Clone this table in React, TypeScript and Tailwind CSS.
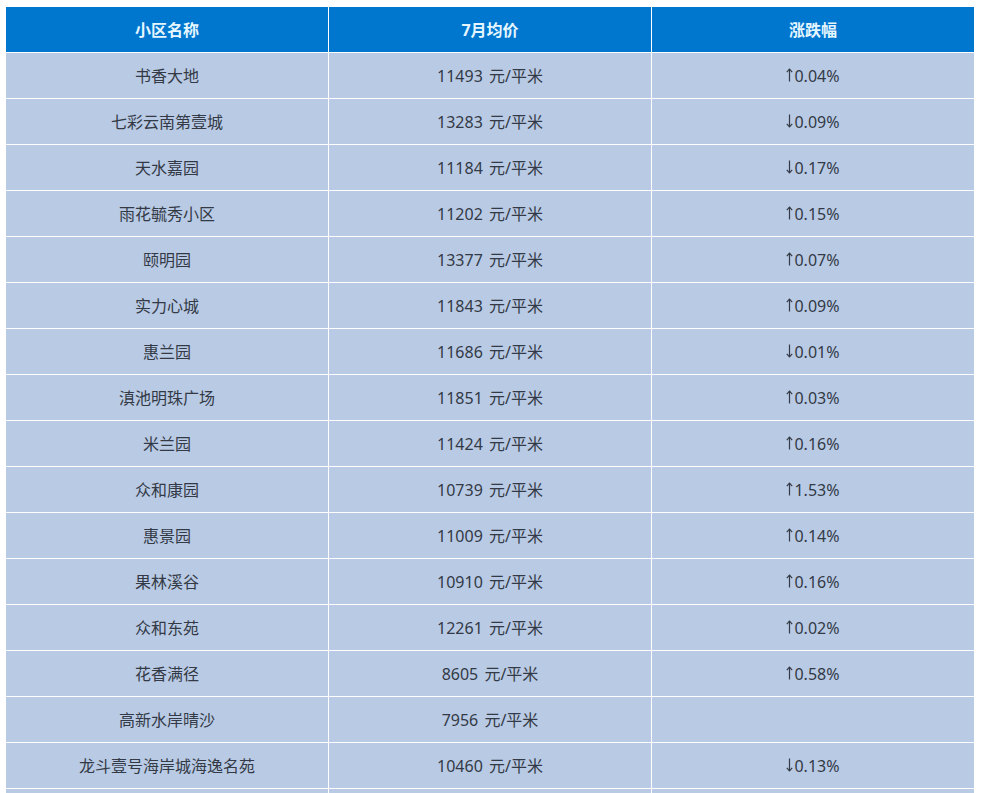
const rows: [string, string, string][] = [
  ["书香大地", "11493 元/平米", "↑0.04%"],
  ["七彩云南第壹城", "13283 元/平米", "↓0.09%"],
  ["天水嘉园", "11184 元/平米", "↓0.17%"],
  ["雨花毓秀小区", "11202 元/平米", "↑0.15%"],
  ["颐明园", "13377 元/平米", "↑0.07%"],
  ["实力心城", "11843 元/平米", "↑0.09%"],
  ["惠兰园", "11686 元/平米", "↓0.01%"],
  ["滇池明珠广场", "11851 元/平米", "↑0.03%"],
  ["米兰园", "11424 元/平米", "↑0.16%"],
  ["众和康园", "10739 元/平米", "↑1.53%"],
  ["惠景园", "11009 元/平米", "↑0.14%"],
  ["果林溪谷", "10910 元/平米", "↑0.16%"],
  ["众和东苑", "12261 元/平米", "↑0.02%"],
  ["花香满径", "8605 元/平米", "↑0.58%"],
  ["高新水岸晴沙", "7956 元/平米", ""],
  ["龙斗壹号海岸城海逸名苑", "10460 元/平米", "↓0.13%"],
  ["", "", ""],
];

// the font arrows are either too wide or too small, so draw a thin one
function Arrow({ up }: { up: boolean }) {
  return (
    <svg
      width="7"
      height="14"
      viewBox="0 0 7 14"
      className={"mr-px -translate-y-px " + (up ? "" : "rotate-180")}
      fill="none"
      stroke="#333a45"
      strokeWidth="1.2"
    >
      <path d="M3.5 1.2V13.5" />
      <path d="M0.8 4.2L3.5 1.2L6.2 4.2" />
    </svg>
  );
}

function Change({ v }: { v: string }) {
  if (!v) return null;
  return (
    <>
      <Arrow up={v[0] === "↑"} />
      <span>{v.slice(1)}</span>
    </>
  );
}

export default function App() {
  return (
    <div
      className="h-[793px] overflow-hidden bg-white pl-[6px] pt-[7px]"
      style={{ fontFamily: '"Noto Sans", "Noto Sans CJK SC", sans-serif' }}
    >
      <div className="grid w-[968px] grid-cols-3 gap-px">
        {["小区名称", "7月均价", "涨跌幅"].map((h) => (
          <div
            key={h}
            className="flex h-[45px] items-center justify-center bg-[#0077cf] text-[16px] font-bold text-[#e6f6ff]"
          >
            {h}
          </div>
        ))}
        {rows.map((r, i) => (
          <>
            <div
              key={i + "a"}
              className="flex h-[45px] items-center justify-center bg-[#b9cae5] text-[16px] text-[#333a45]"
            >
              {r[0]}
            </div>
            <div
              key={i + "b"}
              className="flex h-[45px] items-center justify-center bg-[#b9cae5] text-[16px] text-[#333a45] [word-spacing:2px]"
            >
              {r[1]}
            </div>
            <div
              key={i + "c"}
              className="flex h-[45px] items-center justify-center bg-[#b9cae5] text-[16px] text-[#333a45]"
            >
              <Change v={r[2]} />
            </div>
          </>
        ))}
      </div>
    </div>
  );
}
